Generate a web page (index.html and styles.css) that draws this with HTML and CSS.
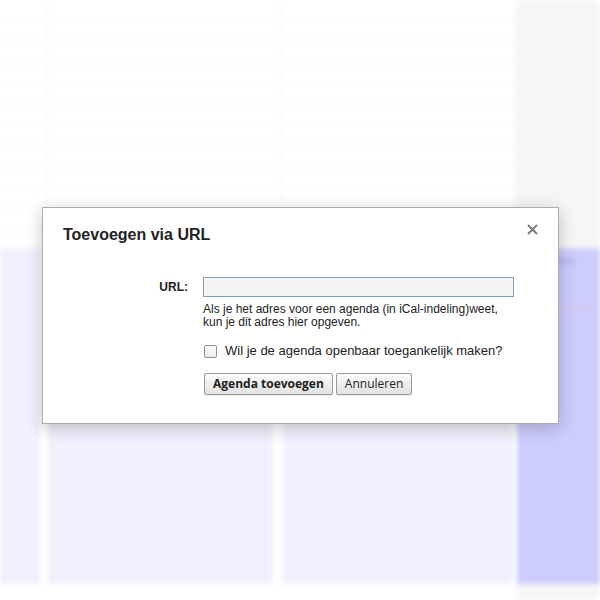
FILE: index.html
```html
<!DOCTYPE html>
<html lang="nl">
<head>
<meta charset="utf-8">
<title>Toevoegen via URL</title>
<link rel="stylesheet" href="styles.css">
</head>
<body>
<div class="backdrop">
  <div class="top">
    <div class="tcol tcol-a"></div>
    <div class="tcol tcol-b"></div>
    <div class="tcol tcol-c"></div>
    <div class="tcol tcol-d"></div>
  </div>
  <div class="cells">
    <div class="cell"></div>
    <div class="cell cell-b"></div>
    <div class="cell cell-c"></div>
    <div class="cell cell-today">
      <div class="ghost-text"></div>
      <div class="ghost-text short"></div>
      <div class="now-line"></div>
    </div>
  </div>
  <div class="foot">
    <div class="foot-main"></div>
    <div class="foot-side"></div>
  </div>
</div>

<div class="dialog" role="dialog">
  <div class="dialog-head">
    <h1 class="dialog-title">Toevoegen via URL</h1>
    <span class="close" aria-label="Sluiten">
      <svg width="11" height="11" viewBox="0 0 11 11"><path d="M1 1L10 10M10 1L1 10" stroke="#7d7d7d" stroke-width="2" fill="none"/></svg>
    </span>
  </div>
  <div class="form">
    <label class="field-label" for="url">URL:</label>
    <div class="field">
      <input class="url-input" id="url" type="text">
      <p class="help">Als je het adres voor een agenda (in iCal-indeling)weet,<br>kun je dit adres hier opgeven.</p>
      <label class="check-row"><span class="checkbox"></span>Wil je de agenda openbaar toegankelijk maken?</label>
      <div class="buttons">
        <button class="btn btn-primary">Agenda toevoegen</button>
        <button class="btn">Annuleren</button>
      </div>
    </div>
  </div>
</div>
</body>
</html>
```

FILE: styles.css
```css
html, body {
  margin: 0;
  padding: 0;
  width: 600px;
  height: 600px;
  overflow: hidden;
  background: #fff;
  font-family: "Liberation Sans", Arial, sans-serif;
}

.backdrop {
  width: 600px;
  height: 600px;
  display: flex;
  flex-direction: column;
  filter: blur(2.5px);
}

.top {
  height: 246px;
  display: grid;
  grid-template-columns: 46px 234px 235px 1fr;
}
.tcol {
  background-image: repeating-linear-gradient(to bottom, transparent 0, transparent 19px, #f9f9f9 19px, #f9f9f9 21px);
  border-left: 2px solid #f8f8f8;
}
.tcol-a { border-left: none; }
.tcol-d { background: #f6f6f6; border-left: none; }

.cells {
  height: 336px;
  display: grid;
  grid-template-columns: 40px 233px 240px 1fr;
  padding-top: 2px;
}
.cell {
  background: #f0f0fe;
}
.cell-b { margin-left: 8px; }
.cell-c { margin-left: 10px; }
.cell-today {
  margin-left: 4px;
  background: #ccccfd;
  padding: 10px 6px 0 8px;
  display: flex;
  flex-direction: column;
  gap: 6px;
}
.ghost-text {
  height: 7px;
  width: 50px;
  background: #bdbdf0;
}
.ghost-text.short { width: 8px; }
.now-line {
  margin-top: 22px;
  height: 2px;
  background: #e2c4e8;
}

.foot {
  flex: 1;
  display: grid;
  grid-template-columns: 517px 1fr;
}
.foot-main { background: #fff; }
.foot-side { background: #f6f6f6; }

.dialog {
  position: absolute;
  left: 42px;
  top: 207px;
  width: 515px;
  height: 215px;
  background: #fff;
  border: 1px solid #acacac;
  box-shadow: 0 4px 16px rgba(0, 0, 0, 0.22);
  display: flex;
  flex-direction: column;
}

.dialog-head {
  display: flex;
  justify-content: space-between;
  align-items: flex-start;
  padding: 17px 20px 0 20px;
}
.dialog-title {
  margin: 0;
  font-size: 16px;
  font-weight: bold;
  color: #222;
  line-height: 20px;
}
.close {
  margin-top: -1px;
  margin-right: 0;
  display: flex;
}

.form {
  display: flex;
  padding-top: 32px;
}
.field-label {
  width: 145px;
  text-align: right;
  font-size: 12px;
  font-weight: bold;
  color: #222;
  padding-top: 3px;
  line-height: 15px;
}
.field {
  margin-left: 15px;
  display: flex;
  flex-direction: column;
}
.url-input {
  box-sizing: border-box;
  width: 311px;
  height: 20px;
  margin: 0;
  border: 1px solid #7f9db9;
  background: #f5f5f5;
  padding: 0 3px;
  font-size: 12px;
}
.help {
  margin: 6px 0 0 0;
  font-size: 12px;
  line-height: 13px;
  color: #222;
}
.check-row {
  display: flex;
  align-items: center;
  margin-top: 14px;
  font-size: 13px;
  color: #222;
  line-height: 16px;
}
.checkbox {
  box-sizing: border-box;
  width: 13px;
  height: 13px;
  border: 1px solid #8f8f8f;
  border-radius: 2px;
  background: linear-gradient(#fdfdfd, #ececec);
  margin-right: 8px;
  margin-left: 1px;
}
.buttons {
  display: flex;
  gap: 3px;
  margin-top: 14px;
  margin-left: 1px;
}
.btn {
  box-sizing: border-box;
  height: 22px;
  padding: 0 8px;
  border: 1px solid #9a9a9a;
  border-radius: 2px;
  background: linear-gradient(#fafafa, #e2e2e2);
  font-family: "Open Sans", "Noto Sans", sans-serif;
  font-size: 12px;
  color: #222;
  line-height: 18px;
  box-shadow: 0 1px 0 rgba(0,0,0,0.08);
}
.btn-primary {
  font-weight: bold;
}
```
